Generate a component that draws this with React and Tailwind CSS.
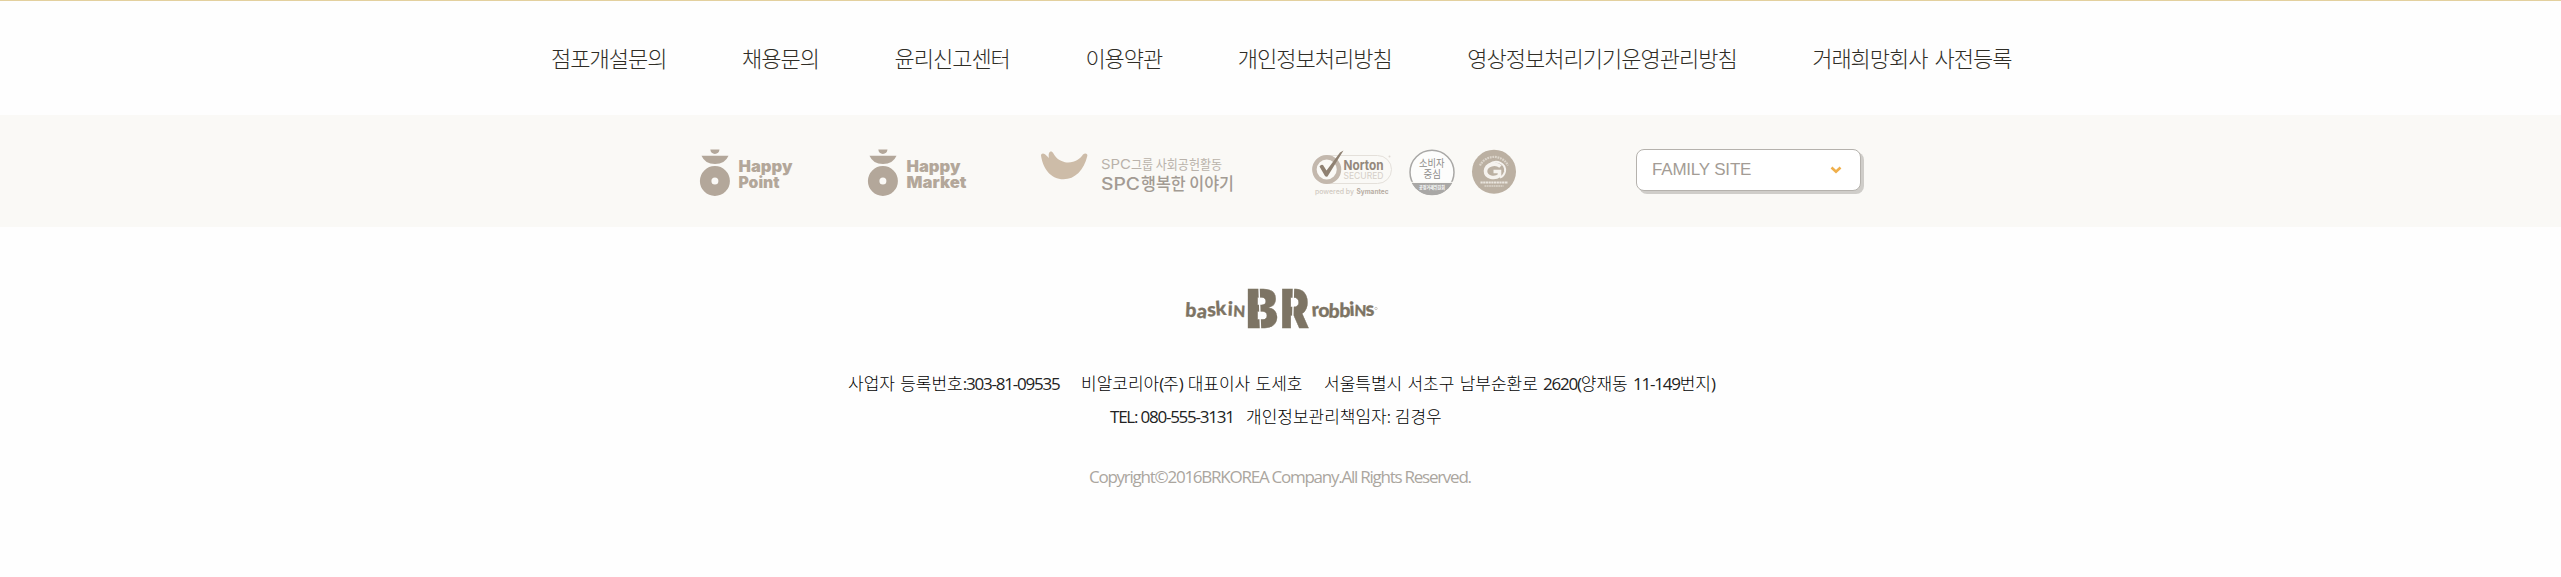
const links = [
  '점포개설문의',
  '채용문의',
  '윤리신고센터',
  '이용약관',
  '개인정보처리방침',
  '영상정보처리기기운영관리방침',
  '거래희망회사 사전등록',
];

function Fit({ x, y, w, size, children, ...rest }) {
  return (
    <text x={x} y={y} fontSize={size} textLength={w} lengthAdjust="spacingAndGlyphs" {...rest}>
      {children}
    </text>
  );
}

function HappyLogo({ word, wordWidth }) {
  return (
    <svg width="110" height="56" viewBox="0 0 110 56" fill="#b3a79a" fontFamily="Inter, sans-serif" fontWeight="900">
      <path d="M14.3 4.5h9.2q-.6 4.4-4.6 4.4t-4.6-4.4z" />
      <path d="M5.5 10.7h27q-3.500 8.300-13.500 8.300t-13.500-8.300z" />
      <path fillRule="evenodd" d="M18.900 21a15 15 0 1 1 0 30a15 15 0 1 1 0-30zm0 11.500a3.500 3.500 0 1 0 0 7a3.500 3.500 0 1 0 0-7z" />
      <Fit x="42.500" y="26.600" w="54" size="15.500">Happy</Fit>
      <Fit x="42.500" y="43" w={wordWidth} size="15.500">{word}</Fit>
    </svg>
  );
}

function StoryLogo() {
  return (
    <svg width="200" height="56" viewBox="1040 145 200 56" fontFamily="'Noto Sans CJK KR', sans-serif">
      <path
        fill="#cdbca8"
        d="M1041 155.500C1041 153.500 1043 152.700 1045 154.200L1049 158C1048 153.500 1049.500 150.800 1052 151.800C1054 153 1055 160 1065 162.200C1074 163.500 1080 159 1083 154.500C1085 152.500 1088 153.500 1087.300 156C1084 170 1075 179.300 1063.500 179.300C1051 179.300 1043 169 1041 155.500Z"
      />
      <g fill="#b9b2aa">
        <Fit x="1101" y="168.500" w="30" size="13.500" fontFamily="Inter, sans-serif">SPC</Fit>
        <Fit x="1131" y="168.500" w="91" size="13">그룹 사회공헌활동</Fit>
      </g>
      <g fill="#a39b93" fontWeight="500">
        <Fit x="1101" y="189.500" w="39" size="17" fontFamily="Inter, sans-serif">SPC</Fit>
        <Fit x="1141" y="189.500" w="93" size="17">행복한 이야기</Fit>
      </g>
    </svg>
  );
}

function NortonLogo() {
  return (
    <svg width="84" height="56" viewBox="1310 145 84 56" fontFamily="Inter, sans-serif">
      <rect x="1313" y="155.500" width="78.500" height="28" rx="14" fill="none" stroke="#e4e0da" />
      <circle cx="1326.700" cy="169.500" r="12.300" fill="#faf9f6" stroke="#c3b8ad" strokeWidth="4.500" />
      <path d="M1340 152.500L1343.500 150.500L1327.500 176.500Q1326 177 1325 176L1319.500 166.500Q1321 164 1323 165L1326.500 170.500Z" fill="#8f8172" />
      <Fit x="1343.500" y="170" w="40" size="13" fontWeight="700" fill="#94887c">Norton</Fit>
      <Fit x="1343.500" y="178.800" w="40" size="8.800" fill="#d5cec6">SECURED</Fit>
      <circle cx="1389.500" cy="156.500" r="1" fill="#ded9d2" />
      <Fit x="1315" y="193.500" w="39" size="7" fontWeight="500" fill="#d0c9c1">powered by</Fit>
      <Fit x="1356.500" y="193.500" w="32" size="7" fontWeight="700" fill="#b8aea4">Symantec</Fit>
    </svg>
  );
}

function ConsumerMark() {
  return (
    <svg width="48" height="56" viewBox="1408 145 48 56" fontFamily="'Noto Sans CJK KR', sans-serif">
      <circle cx="1432" cy="172.300" r="22" fill="#fdfdfc" stroke="#a9a8a6" strokeWidth="1.500" />
      <path d="M1411.800 183H1452.200A22.700 22.700 0 0 1 1411.800 183Z" fill="#a9a8a6" />
      <path d="M1409 182.300H1455" stroke="#faf9f6" />
      <Fit x="1419" y="167.300" w="25.500" size="10" fill="#8d8c8a">소비자</Fit>
      <Fit x="1423.500" y="178" w="17.500" size="10" fill="#8d8c8a">중심</Fit>
      <Fit x="1419" y="189.300" w="26" size="4.800" fontWeight="700" fill="#fff">공정거래위원회</Fit>
    </svg>
  );
}

function QualityMark() {
  return (
    <svg width="46" height="56" viewBox="1471 145 46 56">
      <circle cx="1494" cy="171.700" r="22" fill="#bbb0a2" />
      <path d="M1480 165.500A15.500 15 0 0 1 1508 165.500" fill="none" stroke="#dcd5cb" strokeWidth="2.200" strokeDasharray="1.800 .8" />
      <path d="M1500.500 166.500C1496 162.500 1486 164 1485.500 171C1485.500 178 1495 179 1499.500 175.500V171.500H1493.500" fill="none" stroke="#f5f2ee" strokeWidth="3.600" />
      <path d="M1489 164.500C1497 158.500 1506 164 1505 171.500Q1504 176 1500 177.500" fill="none" stroke="#f5f2ee" strokeWidth="2" />
      <path d="M1480.500 182.500H1508" stroke="#eae5de" strokeWidth="2" strokeDasharray="2.200 .5" />
      <path d="M1484.500 186H1503.500" stroke="#dcd5cb" strokeWidth="1.500" strokeDasharray="1.800 .5" />
    </svg>
  );
}

const baskin = [
  ['b', 1185, 316.500, 3],
  ['a', 1196.500, 317.500, 6],
  ['s', 1207.500, 316.500, -3],
  ['k', 1216, 315.500, -4],
  ['i', 1227.500, 315.500, 2],
  ['N', 1233, 316.500, 3],
];
const robbins = [
  ['r', 1312, 316.500, -4],
  ['o', 1318.300, 316.500, 0],
  ['b', 1328.300, 317.500, 3],
  ['b', 1339.300, 317, 1],
  ['i', 1349.800, 316, -3],
  ['N', 1354.200, 316, 2],
  ['s', 1366, 316, -4],
];

function BrandLogo() {
  return (
    <svg className="overflow-visible" width="200" height="44" viewBox="1180 286 200 44" fill="#7d7464" stroke="#7d7464" fontFamily="Inter, sans-serif" fontWeight="900">
      <g fontSize="54" strokeWidth=".4">
        <text transform="translate(1245.800 327.500) scale(.9 1)">B</text>
        <text transform="translate(1280.200 327.500) scale(.8 1)">R</text>
      </g>
      <path d="M1259 287L1260.500 329M1293.500 287L1292.500 329" stroke="#fefefe" strokeWidth="1.400" />
      <g fontFamily="Lato, sans-serif" strokeWidth=".3">
        {[...baskin, ...robbins].map(([c, x, y, r]) => (
          <text key={x} fontSize={c === 'N' ? 15.5 : 19.5} transform={`translate(${x} ${y}) rotate(${r})`}>{c}</text>
        ))}
      </g>
      <circle cx="1376" cy="308.500" r="1.200" fill="none" stroke="#b9b3a9" strokeWidth=".7" />
    </svg>
  );
}

function Latin({ children }) {
  return <span className="font-['Open_Sans'] font-normal tracking-[-1.23px] text-[#222]">{children}</span>;
}

export default function App() {
  return (
    <footer className="flex h-[577px] w-[2561px] flex-col border-t border-[#e3d09e] bg-[#fefefe] font-['Noto_Sans_CJK_KR',sans-serif]">
      <nav className="flex h-[114px] shrink-0 gap-[75.5px] pt-[40px] pl-[551px] text-[22px] leading-[32px] font-light tracking-[-1px] [word-spacing:3px] whitespace-nowrap text-[#2f2d26]">
        {links.map((t) => (
          <a key={t}>{t}</a>
        ))}
      </nav>

      <section className="flex h-[112px] shrink-0 items-start bg-[#faf9f6] pt-[30px] pl-[696px]">
        <HappyLogo word="Point" wordWidth="41" />
        <div className="ml-[58px]"><HappyLogo word="Market" wordWidth="60" /></div>
        <div className="ml-[66px]"><StoryLogo /></div>
        <div className="ml-[70px]"><NortonLogo /></div>
        <div className="ml-[14px]"><ConsumerMark /></div>
        <div className="ml-[15px]"><QualityMark /></div>
        <button className="mt-[4px] ml-[119px] flex h-[42px] w-[225px] items-center justify-between rounded-[8px] border border-[#b5b2ad] bg-white pr-[18px] pl-[15px] font-['Liberation_Sans'] text-[17px] tracking-[-0.2px] text-[#a39c95] shadow-[3px_3px_0_#cfcdc9]">
          <span>FAMILY SITE</span>
          <svg width="12" height="8" viewBox="0 0 12 8" fill="none" stroke="#efaf4b" strokeWidth="2.600">
            <path d="M1.500 1.500L6 5.800L10.500 1.500" />
          </svg>
        </button>
      </section>

      <div className="flex pt-[59px] pl-[1180px]"><BrandLogo /></div>

      <div className="mt-[37px] text-[17px] leading-[32px] font-light whitespace-pre text-black">
        <p className="flex pl-[848px] [word-spacing:1.5px]">
          <span className="w-[233px]">사업자 등록번호<Latin>:303-81-09535</Latin></span>
          <span className="w-[243px]">비알코리아<Latin>(</Latin>주<Latin>)</Latin> 대표이사 도세호</span>
          <span>서울특별시 서초구 남부순환로 <Latin>2620(</Latin>양재동 <Latin>11-149</Latin>번지<Latin>)</Latin></span>
        </p>
        <p className="flex pl-[1110px]">
          <span className="w-[136px]"><Latin>TEL: 080-555-3131</Latin></span>
          <span>개인정보관리책임자: 김경우</span>
        </p>
      </div>
      <p className="mt-[28px] pl-[1089px] font-['Open_Sans'] text-[17px] leading-[32px] tracking-[-1.25px] whitespace-nowrap text-[#aba69f]">
        Copyright©2016BRKOREA Company.All Rights Reserved.
      </p>
    </footer>
  );
}
